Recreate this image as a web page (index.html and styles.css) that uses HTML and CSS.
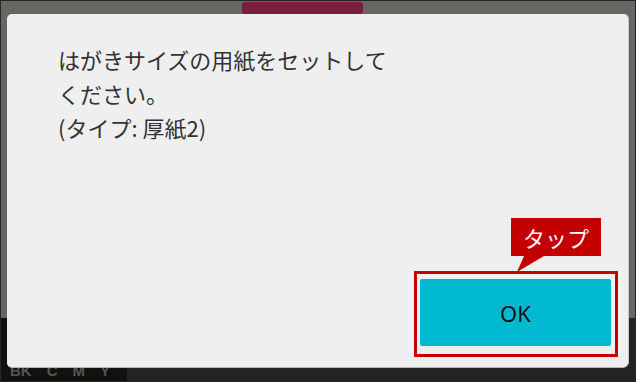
FILE: index.html
```html
<!DOCTYPE html>
<html lang="ja">
<head>
<meta charset="utf-8">
<link rel="stylesheet" href="styles.css">
</head>
<body>
<div class="screen">
  <div class="top"><div class="tab"></div></div>
  <div class="bottom">
    <div class="inks"><span>BK</span><span>C</span><span>M</span><span>Y</span></div>
    <div class="rest"></div>
  </div>
  <div class="dialog">
    <p class="msg">はがきサイズの用紙をセットして<br>ください。<br>(タイプ: 厚紙2)</p>
    <div class="actions">
      <div class="highlight">
        <button class="ok">OK</button>
        <div class="callout">タップ</div>
      </div>
    </div>
  </div>
</div>
</body>
</html>
```
FILE: styles.css
```css
html, body {
  margin: 0;
  padding: 0;
  background: #1e1e1e;
}
.screen {
  position: relative;
  width: 636px;
  height: 382px;
  box-sizing: border-box;
  border: 1px solid #262626;
  display: flex;
  flex-direction: column;
  font-family: "Noto Sans CJK JP", "Noto Sans", sans-serif;
}
.top {
  height: 317px;
  background: #666763;
  flex: none;
}
.tab {
  margin-left: 241px;
  margin-top: 1px;
  width: 121px;
  height: 12px;
  background: #7a1e40;
  border-radius: 3px;
}
.bottom {
  flex: 1;
  display: flex;
  background: #232323;
}
.inks {
  width: 126px;
  background: #101210;
  display: flex;
  align-items: flex-end;
  gap: 15px;
  padding: 0 0 3px 9px;
  box-sizing: border-box;
  font-family: "Liberation Sans", sans-serif;
  font-weight: bold;
  font-size: 15px;
  line-height: 15px;
  color: #555555;
}
.rest {
  flex: 1;
}
.dialog {
  position: absolute;
  left: 6px;
  top: 13px;
  width: 621px;
  height: 353px;
  box-sizing: border-box;
  background: #efefef;
  border-radius: 5px;
  box-shadow: 0 1px 0 #b8b8b8, 1px 0 0 #c8c8c8;
  display: flex;
  flex-direction: column;
  padding: 28px 10px 10px 51px;
}
.msg {
  margin: 0;
  font-size: 22px;
  line-height: 34px;
  color: #333333;
}
.actions {
  margin-top: auto;
  display: flex;
  justify-content: flex-end;
}
.highlight {
  position: relative;
  width: 204px;
  height: 86px;
  box-sizing: border-box;
  border: 3px solid #c20000;
  padding: 5px 4px 6px 3px;
}
.ok {
  display: block;
  width: 191px;
  height: 67px;
  margin: 0;
  border: none;
  border-radius: 2px;
  background: #00b8d0;
  color: #111111;
  font-family: "Noto Sans", sans-serif;
  font-size: 22px;
  padding: 0;
}
.callout {
  position: absolute;
  left: 94px;
  top: -56px;
  width: 90px;
  height: 38px;
  background: #c20000;
  color: #ffffff;
  font-size: 22px;
  line-height: 38px;
  text-align: center;
}
.callout::after {
  content: "";
  position: absolute;
  left: 0;
  top: 38px;
  width: 40px;
  height: 17px;
  background: #c20000;
  clip-path: polygon(13px 0, 33px 0, 6px 16px);
}
```
